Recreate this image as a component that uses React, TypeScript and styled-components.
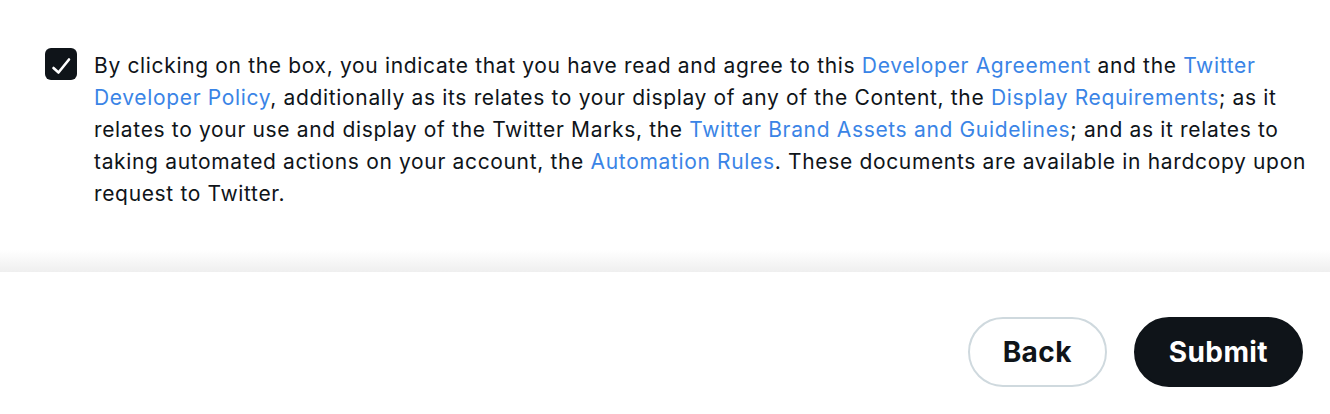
import React from "react";
import styled, { createGlobalStyle } from "styled-components";

const Global = createGlobalStyle`
  html, body { margin: 0; padding: 0; background: #ffffff; }
  body { font-family: Inter, "Noto Sans", sans-serif; color: #0f1419; }
`;

const Page = styled.div`
  display: flex;
  flex-direction: column;
  width: 1330px;
  height: 414px;
  overflow: hidden;
`;

const Body = styled.div`
  display: flex;
  flex: 0 0 auto;
  gap: 17px;
  align-items: flex-start;
  padding: 48px 20px 0 45px;
  height: 224px;
`;

const CheckBox = styled.div`
  flex: 0 0 32px;
  width: 32px;
  height: 32px;
  border-radius: 6px;
  background: #0f1419;
  display: flex;
  align-items: center;
  justify-content: center;
`;

const Text = styled.p`
  margin: 2px 0 0;
  font-size: 21px;
  line-height: 32px;
  letter-spacing: 0.66px;
  color: #0f1419;
`;

const Link = styled.a`
  color: #3a84e6;
  text-decoration: none;
`;

const Footer = styled.div`
  position: relative;
  flex: 1;
  display: flex;
  justify-content: flex-end;
  align-items: flex-start;
  gap: 27px;
  padding: 45px 27px 0 0;
  background: #ffffff;
  &::before {
    content: "";
    position: absolute;
    left: 0;
    right: 0;
    top: -22px;
    height: 22px;
    background: linear-gradient(to bottom, rgba(239,239,239,0), #efefef);
  }
`;

const Button = styled.button<{ $primary?: boolean }>`
  height: 70px;
  padding: 0 ${(p) => (p.$primary ? "33px" : "33px")};
  border-radius: 35px;
  font-family: Inter, "Noto Sans", sans-serif;
  font-weight: 700;
  font-size: 28px;
  letter-spacing: 0.4px;
  cursor: pointer;
  border: 2px solid ${(p) => (p.$primary ? "#0f1419" : "#cfd9de")};
  background: ${(p) => (p.$primary ? "#0f1419" : "#ffffff")};
  color: ${(p) => (p.$primary ? "#ffffff" : "#0f1419")};
`;

export default function App() {
  return (
    <>
      <Global />
      <Page>
        <Body>
          <CheckBox>
            <svg width="32" height="32" viewBox="0 0 32 32">
              <path d="M8.5 20 L13.5 24.5 L24 11.5" fill="none" stroke="#ffffff" strokeWidth="2.6" strokeLinecap="round" strokeLinejoin="round" />
            </svg>
          </CheckBox>
          <Text>
            By clicking on the box, you indicate that you have read and agree to this{" "}
            <Link>Developer Agreement</Link> and the <Link>Twitter Developer Policy</Link>,
            additionally as its relates to your display of any of the Content, the{" "}
            <Link>Display Requirements</Link>; as it relates to your use and display of the
            Twitter Marks, the <Link>Twitter Brand Assets and Guidelines</Link>; and as it
            relates to taking automated actions on your account, the{" "}
            <Link>Automation Rules</Link>. These documents are available in hardcopy upon
            request to Twitter.
          </Text>
        </Body>
        <Footer>
          <Button>Back</Button>
          <Button $primary>Submit</Button>
        </Footer>
      </Page>
    </>
  );
}
